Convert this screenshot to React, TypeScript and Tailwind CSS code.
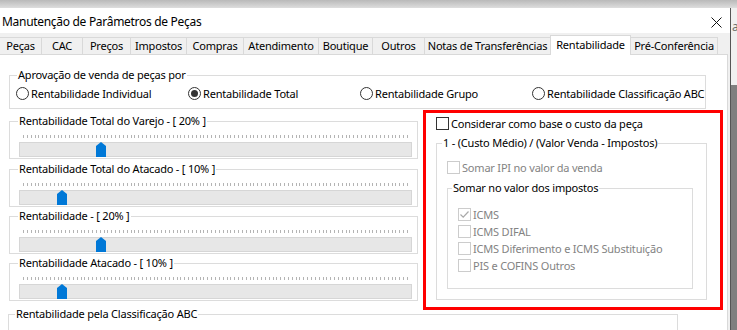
import type { ReactNode } from "react";

const TABS = [
  { label: "Peças", w: 41 },
  { label: "CAC", w: 41 },
  { label: "Preços", w: 48 },
  { label: "Impostos", w: 56 },
  { label: "Compras", w: 57 },
  { label: "Atendimento", w: 75 },
  { label: "Boutique", w: 54 },
  { label: "Outros", w: 52 },
  { label: "Notas de Transferências", w: 126 },
  { label: "Rentabilidade", w: 81, active: true },
  { label: "Pré-Conferência", w: 87 },
];

const SLIDERS = [
  { label: "Rentabilidade Total do Varejo - [ 20% ]", value: 20, mt: "mt-[11px]" },
  { label: "Rentabilidade Total do Atacado - [ 10% ]", value: 10, mt: "mt-[10px]" },
  { label: "Rentabilidade - [ 20% ]", value: 20, mt: "mt-[9px]" },
  { label: "Rentabilidade Atacado - [ 10% ]", value: 10, mt: "mt-[9px]" },
];

const IMPOSTOS = [
  { label: "ICMS", checked: true },
  { label: "ICMS DIFAL" },
  { label: "ICMS Diferimento e ICMS Substituição" },
  { label: "PIS e COFINS Outros" },
];

function GroupLabel({ children, left }: { children: ReactNode; left: string }) {
  return (
    <span className={`absolute -top-[9px] ${left} bg-white px-[1px] leading-[16px] text-black whitespace-nowrap`}>
      {children}
    </span>
  );
}

function Radio({ label, checked }: { label: string; checked?: boolean }) {
  return (
    <div className="flex w-[172px] shrink-0 items-center gap-[2px] whitespace-nowrap">
      <span className="flex h-[13px] w-[13px] shrink-0 items-center justify-center rounded-full border border-[#333333] bg-white">
        {checked && <span className="h-[7px] w-[7px] rounded-full bg-[#333333]" />}
      </span>
      <span className="leading-[15px]">{label}</span>
    </div>
  );
}

function CheckBox({ label, disabled, checked }: { label: string; disabled?: boolean; checked?: boolean }) {
  return (
    <div className="flex h-[13px] items-center gap-[2px]">
      <span
        className={`flex h-[13px] w-[13px] shrink-0 items-center justify-center border bg-white ${
          disabled ? "border-[#cccccc]" : "border-[#333333]"
        }`}
      >
        {checked && (
          <svg width="11" height="11" viewBox="0 0 11 11">
            <path d="M1.5 5.5 L4.2 8.2 L9.5 2.5" fill="none" stroke="#a9a9a9" strokeWidth="1.2" />
          </svg>
        )}
      </span>
      <span className={`leading-[15px] whitespace-nowrap ${disabled ? "text-[#838383]" : "text-black"}`}>{label}</span>
    </div>
  );
}

function Ticks() {
  const xs = Array.from({ length: 101 }, (_, i) => Math.round(i * 3.84) + 0.5);
  return (
    <svg width="386" height="3" className="ml-[13px] block">
      {xs.map((x) => (
        <line key={x} x1={x} y1="0" x2={x} y2="3" stroke="#b4b4b4" strokeWidth="1" />
      ))}
    </svg>
  );
}

function Slider({ label, value, mt }: { label: string; value: number; mt: string }) {
  return (
    <div className={`relative ${mt} h-[38px] border border-[#dcdcdc] pt-[13px]`}>
      <GroupLabel left="left-[8px]">{label}</GroupLabel>
      <Ticks />
      <div className="relative ml-[9px] mt-[4px] h-[15px] w-[393px] border border-[#d6d6d6] bg-[#e7e7e7]">
        <svg
          width="10"
          height="15"
          viewBox="0 0 10 15"
          className="absolute -top-px"
          style={{ left: Math.round(value * 3.84) - 1 }}
        >
          <path d="M0 4 L5 0 L10 4 L10 15 L0 15 Z" fill="#0078d7" />
        </svg>
      </div>
    </div>
  );
}

export default function App() {
  return (
    <div className="flex h-[330px] w-[737px] flex-col overflow-hidden bg-[#f0f0f0] font-['Noto_Sans',sans-serif] text-[11px] tracking-[-0.2px] text-black">
      <div className="h-[8px] shrink-0 bg-gradient-to-b from-[#b9b9b9] to-[#dddddd]" />
      <div className="flex flex-1">
        <div className="flex w-[731px] shrink-0 flex-col border-r border-[#555555]">
          <div className="flex h-[25px] items-center justify-between bg-white pl-[2px] pr-[8px] pt-[3px]">
            <span className="text-[12px] tracking-[-0.3px]">Manutenção de Parâmetros de Peças</span>
            <svg width="11" height="11" viewBox="0 0 11 11">
              <path d="M0.5 0.5 L10.5 10.5 M10.5 0.5 L0.5 10.5" stroke="#111111" strokeWidth="1" />
            </svg>
          </div>
          <div className="flex flex-1 flex-col pt-[1px]">
            <div className="relative z-10 flex h-[20px] items-end">
              {TABS.map((t, i) =>
                t.active ? (
                  <div
                    key={t.label}
                    className="-mb-px flex h-[20px] items-start justify-center border-x border-t border-[#d9d9d9] bg-white pt-[1px]"
                    style={{ width: t.w }}
                  >
                    {t.label}
                  </div>
                ) : (
                  <div
                    key={t.label}
                    className={`flex h-[17px] items-center justify-center border-t border-[#d9d9d9] ${
                      i > 0 && !TABS[i - 1].active ? "border-l" : ""
                    } ${i === TABS.length - 1 ? "border-r" : ""}`}
                    style={{ width: t.w }}
                  >
                    {t.label}
                  </div>
                )
              )}
            </div>
            <div className="flex w-[728px] flex-1 flex-col border-r border-t border-[#d9d9d9] bg-white">
              <div className="relative ml-[9px] mt-[20px] h-[34px] w-[697px] shrink-0 border border-[#dcdcdc] pl-[6px] pt-[10px]">
                <GroupLabel left="left-[7px]">Aprovação de venda de peças por</GroupLabel>
                <div className="flex h-[15px]">
                  <Radio label="Rentabilidade Individual" />
                  <Radio label="Rentabilidade Total" checked />
                  <Radio label="Rentabilidade Grupo" />
                  <Radio label="Rentabilidade Classificação ABC" />
                </div>
              </div>

              <div className="mt-px flex shrink-0">
                <div className="ml-[9px] flex w-[409px] flex-col">
                  {SLIDERS.map((s) => (
                    <Slider key={s.label} {...s} />
                  ))}
                </div>
                <div className="ml-[5px] h-[200px] w-[300px] border-[3px] border-[#ff0000] pl-[10px] pt-[4px]">
                  <CheckBox label="Considerar como base o custo da peça" />
                  <div className="relative mt-[13px] h-[157px] w-[271px] border border-[#dcdcdc] pl-[10px] pt-[17px]">
                    <GroupLabel left="left-[5px]">1 - (Custo Médio) / (Valor Venda - Impostos)</GroupLabel>
                    <CheckBox label="Somar IPI no valor da venda" disabled />
                    <div className="relative mt-[14px] flex h-[101px] w-[246px] flex-col gap-[4px] border border-[#dcdcdc] pl-[10px] pt-[19px]">
                      <GroupLabel left="left-[4px]">Somar no valor dos impostos</GroupLabel>
                      {IMPOSTOS.map((c) => (
                        <CheckBox key={c.label} label={c.label} checked={c.checked} disabled />
                      ))}
                    </div>
                  </div>
                </div>
              </div>

              <div className="relative ml-[8px] mt-[4px] h-[40px] w-[670px] shrink-0 border-x border-t border-[#dcdcdc]">
                <GroupLabel left="left-[6px]">Rentabilidade pela Classificação ABC</GroupLabel>
              </div>
            </div>
          </div>
        </div>
        <div className="flex flex-1 flex-col">
          <div className="h-[77px] overflow-hidden whitespace-nowrap pl-[1px] pt-[10px] text-[12px] text-[#6d6d6d]">ação</div>
          <div className="flex-1 bg-[#7f7f7f]" />
        </div>
      </div>
    </div>
  );
}
